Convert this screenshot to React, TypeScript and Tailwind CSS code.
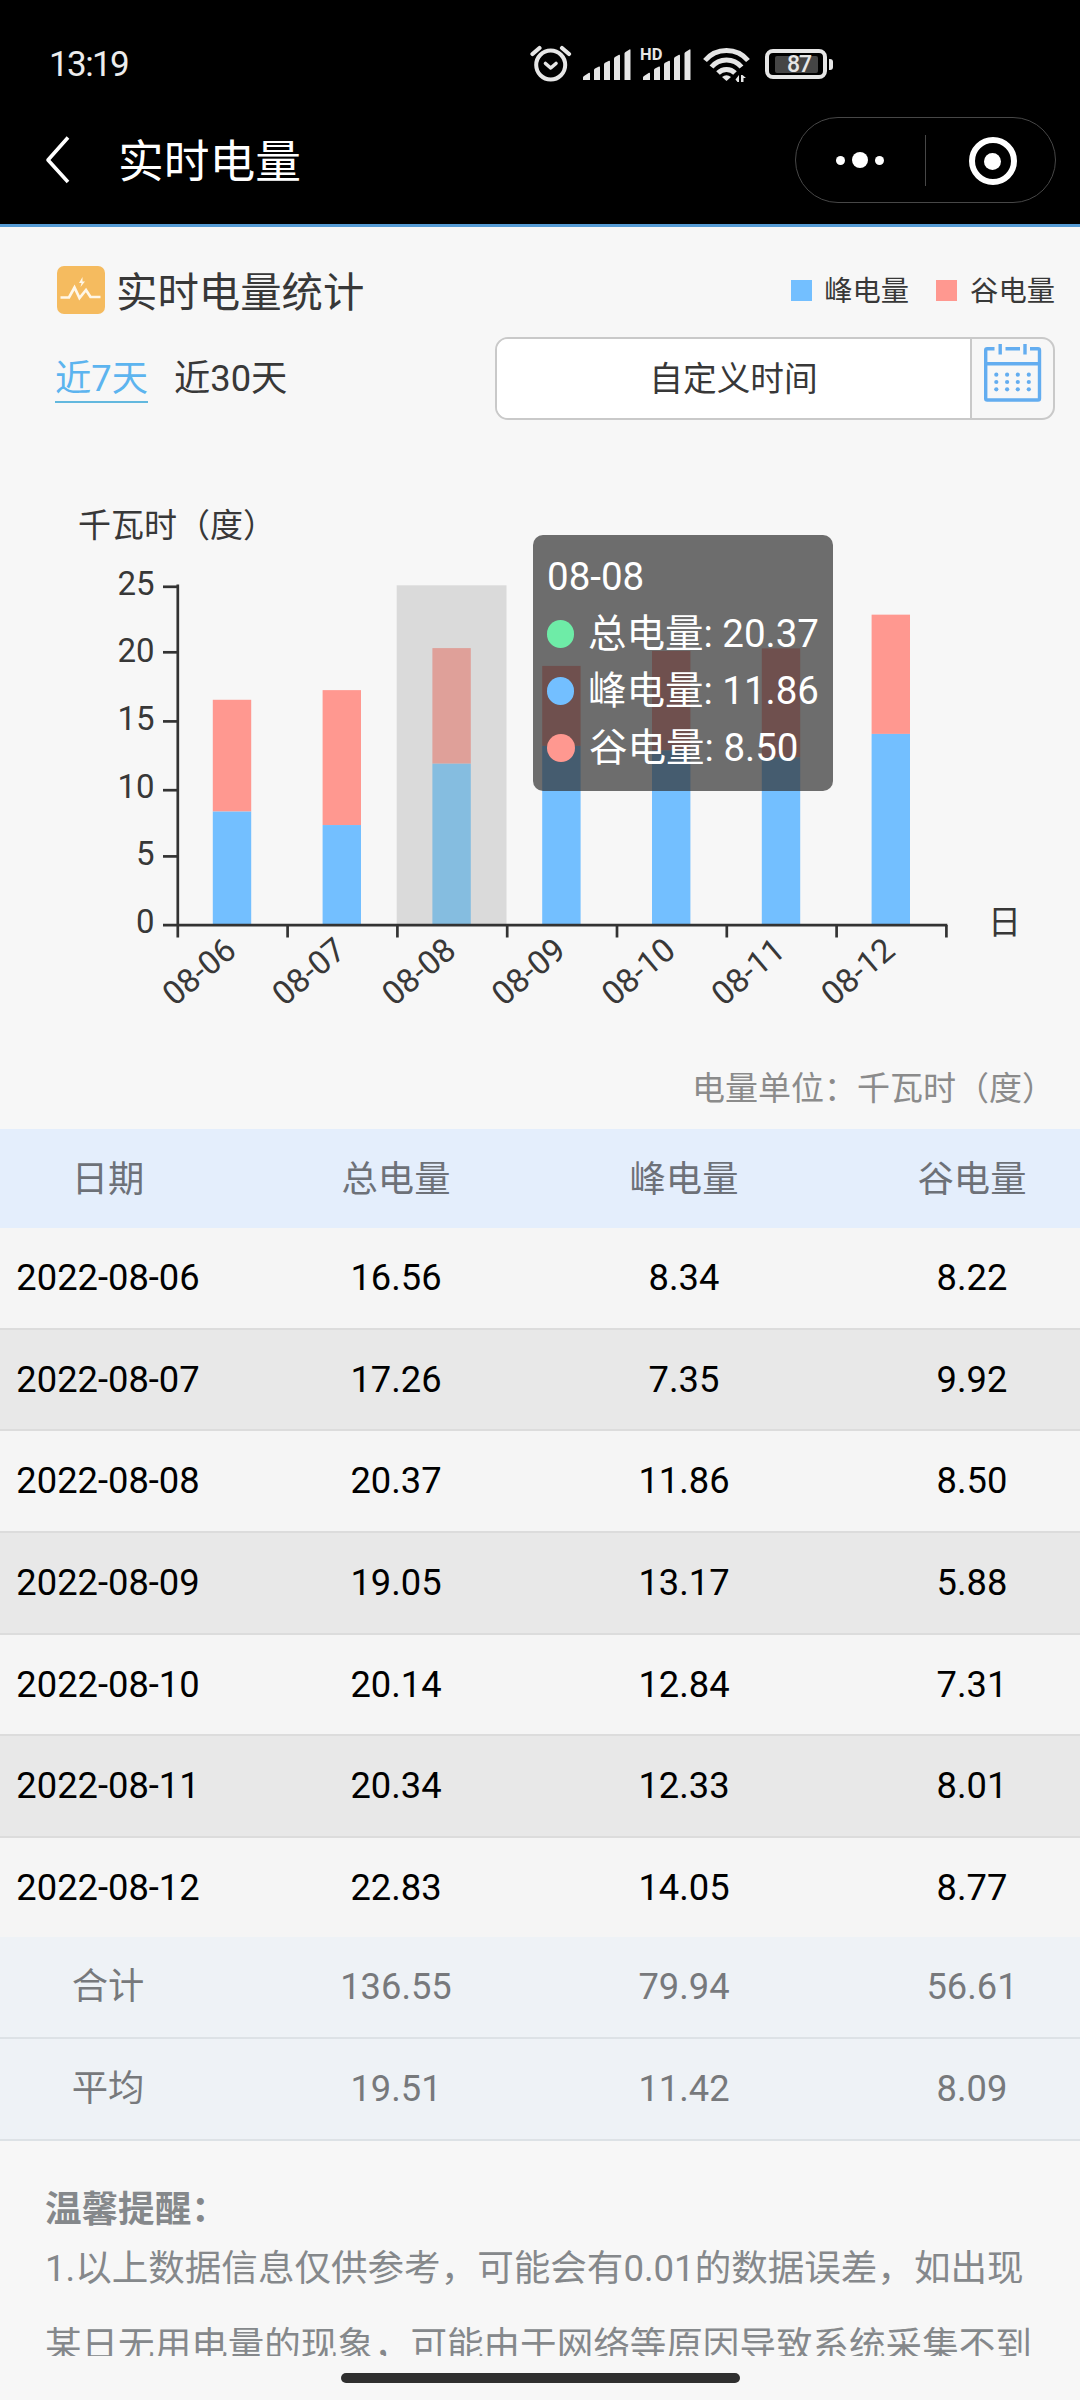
import React from 'react';

interface UsageRow {
  date: string;
  total: number;
  peak: number;
  valley: number;
}

const rows: UsageRow[] = [
  { date: '2022-08-06', total: 16.56, peak: 8.34, valley: 8.22 },
  { date: '2022-08-07', total: 17.26, peak: 7.35, valley: 9.92 },
  { date: '2022-08-08', total: 20.37, peak: 11.86, valley: 8.5 },
  { date: '2022-08-09', total: 19.05, peak: 13.17, valley: 5.88 },
  { date: '2022-08-10', total: 20.14, peak: 12.84, valley: 7.31 },
  { date: '2022-08-11', total: 20.34, peak: 12.33, valley: 8.01 },
  { date: '2022-08-12', total: 22.83, peak: 14.05, valley: 8.77 },
];

const summary = [
  ['合计', '136.55', '79.94', '56.61'],
  ['平均', '19.51', '11.42', '8.09'],
];

const ACTIVE = 2;

const SignalBars: React.FC = () => (
  <svg width="48" height="32" viewBox="0 0 48 32" fill="#e6e6e6">
    <path d="M0 31V28.5Q0 27.5 1 27L6 23.8Q7 23.3 7 24.5V31Z" />
    <path d="M11 31V21Q11 20 12 19.5L16 17.6Q17 17.2 17 18.4V31Z" />
    <path d="M21 31V15.3Q21 14.3 22 13.8L26 11.8Q27 11.3 27 12.5V31Z" />
    <path d="M31 31V9.6Q31 8.6 32 8L36 5.8Q37 5.3 37 6.5V31Z" />
    <path d="M41.500 31V4.500Q41.500 3.500 42.500 2.900L46.500 0.500Q47.500 0 47.500 1.200V31Z" />
  </svg>
);

const StatusBar: React.FC = () => (
  <div className="flex h-[90px] items-start pl-[49px] pt-[43px]">
    <span className="w-[481px] text-[35px] leading-[44px] tracking-[-1.6px] text-[#ececec]">13:19</span>
    <div className="flex items-start">
      <svg className="mt-[2px]" width="42" height="38" viewBox="0 0 42 38" fill="none" stroke="#e6e6e6" strokeLinecap="round">
        <circle cx="20.700" cy="20" r="14.500" strokeWidth="4" />
        <path d="M15.500 18.500L20.700 23L26 18.500" strokeWidth="3.600" strokeLinejoin="round" />
        <path d="M2.500 9L9.500 3M39 9L32 3" strokeWidth="4.200" />
      </svg>
      <div className="ml-[11px] mt-[6px]">
        <SignalBars />
      </div>
      <div className="relative ml-[12px] mt-[6px]">
        <SignalBars />
        <span className="absolute left-[-3px] top-[-3px] text-[16.500px] font-bold leading-[18px] text-[#e6e6e6]">HD</span>
      </div>
      <svg className="ml-[12px] mt-[4px]" width="48" height="36" viewBox="0 0 48 36" fill="none" stroke="#e6e6e6" strokeWidth="5">
        <path d="M2 13.500A28 28 0 0 1 45 13.500" />
        <path d="M8.500 20A19.500 19.500 0 0 1 38.500 20" />
        <path d="M15 26A11.800 11.800 0 0 1 32 26" />
        <path d="M23.500 34L19 30Q23.500 26.500 28 30Z" fill="#e6e6e6" stroke="none" />
        <path d="M32.500 32.500L36 28V35H34.500ZM38 28H39.500L43 31H40.500V35H38Z" fill="#e6e6e6" stroke="none" />
      </svg>
      <div className="ml-[14px] mt-[6px] flex items-center gap-[2px]">
        <div className="flex h-[30px] w-[62px] items-center justify-center rounded-[8px] border-[4px] border-[#e6e6e6]">
          <div className="flex h-[17px] w-[43px] items-center justify-center rounded-[2px] bg-[#454545] pl-[6px] text-[23px] font-medium leading-[17px] tracking-[-1px] text-[#e6e6e6]">
            87
          </div>
        </div>
        <div className="h-[11px] w-[4px] rounded-r-[3px] bg-[#e6e6e6]" />
      </div>
    </div>
  </div>
);

const NavBar: React.FC = () => (
  <div className="flex h-[134px] items-start justify-between pl-[44px] pr-[24px] pt-[27px]">
    <div className="flex h-[86px] items-center">
      <svg width="28" height="48" viewBox="0 0 28 48" fill="none" stroke="#fff" strokeWidth="3.600" strokeLinejoin="round">
        <path d="M24 1.500L4 24L24 46" />
      </svg>
      <h1 className="ml-[46px] pt-[5px] text-[45.750px] leading-[64px] text-white">实时电量</h1>
    </div>
    <div className="flex h-[86px] w-[261px] items-center rounded-full border border-[#474747]">
      <div className="flex w-[129px] items-center justify-center gap-[7px] pr-[2px]">
        <span className="h-[9px] w-[9px] rounded-full bg-white" />
        <span className="h-4 w-4 rounded-full bg-white" />
        <span className="h-[9px] w-[9px] rounded-full bg-white" />
      </div>
      <span className="h-[51px] w-px bg-[#474747]" />
      <div className="flex flex-1 items-center justify-center">
        <div className="ml-[4px] mt-[2px] flex h-12 w-12 items-center justify-center rounded-full border-[6px] border-white">
          <span className="h-[17px] w-[17px] rounded-full bg-white" />
        </div>
      </div>
    </div>
  </div>
);

const StatIcon: React.FC = () => (
  <svg width="48" height="48" viewBox="0 0 48 48" fill="none">
    <rect width="48" height="48" rx="7" fill="#f5bb5f" />
    <path d="M3.500 31.500H12L17.500 21.500L22.500 32L29 24L33.500 31H43.500" stroke="#fff7e8" strokeWidth="2.700" />
    <path d="M25.500 11L22 17H24.500L23.500 21L28 15.500H25.500Z" fill="#fff7e8" />
  </svg>
);

const CalendarIcon: React.FC = () => (
  <svg width="58" height="58" viewBox="0 0 58 58" fill="none" stroke="#63adf0" strokeWidth="3.400">
    <path d="M10.500 4.800H3.200Q1.700 4.800 1.700 6.300V54.500Q1.700 56 3.200 56H54Q55.500 56 55.500 54.500V6.300Q55.500 4.800 54 4.800H46M21.500 4.800H36M1.700 19.800H55.500" />
    <path d="M16.200 0V10.500M41 0V10.500" />
    {[30.7, 38, 45.3].map((y) =>
      [12.3, 23.1, 33.8, 44.8].map((x) => <circle key={`${x}-${y}`} cx={x} cy={y} r="2.1" fill="#63adf0" stroke="none" />)
    )}
  </svg>
);

const Legend: React.FC = () => (
  <div className="flex items-center gap-[27px] text-[28.300px] leading-[40px] text-[#383838]">
    <span className="flex items-center gap-[12px]">
      <i className="h-[21px] w-[21px] bg-[#73bfff]" />
      <span className="pt-[4px]">峰电量</span>
    </span>
    <span className="flex items-center gap-[13px]">
      <i className="h-[21px] w-[21px] bg-[#ff9890]" />
      <span className="pt-[4px]">谷电量</span>
    </span>
  </div>
);

const UsageChart: React.FC = () => {
  const x0 = 177.8;
  const y0 = 425;
  const step = 109.8;
  const unit = 13.6;
  return (
    <svg className="block" width="1080" height="540" viewBox="0 0 1080 540" fontSize="33" fill="#383838">
      <text x="78" y="37">千瓦时（度）</text>
      <rect x={x0 + step * ACTIVE - 0.7} y="85.300" width={step} height="339.700" fill="#dadada" />
      {rows.map((r, i) => {
        const x = x0 + step * i + 35;
        const active = i === ACTIVE;
        const peakH = r.peak * unit;
        const valleyH = r.valley * unit;
        return (
          <g key={r.date}>
            <rect x={x} y={y0 - peakH - valleyH} width="38.400" height={valleyH} fill={active ? '#dfa099' : '#ff9890'} />
            <rect x={x} y={y0 - peakH} width="38.400" height={peakH} fill={active ? '#85bde0' : '#73bfff'} />
            <text
              transform={`translate(${198.8 + step * i} 471.300) rotate(-40)`}
              dy="0.356em"
              fontSize="33"
              textAnchor="middle"
            >
              {r.date.slice(5)}
            </text>
          </g>
        );
      })}
      <g stroke="#333" strokeWidth="2.700">
        <path d="M177.800 84.500V437.500M163 425.200H947.300" />
        {[86.8, 152.3, 221.4, 290.2, 356.4].map((y) => (
          <path key={y} d={`M163 ${y}H178`} />
        ))}
        {[1, 2, 3, 4, 5, 6, 7].map((i) => (
          <path key={i} d={`M${x0 + i * step} 425V437.500`} />
        ))}
      </g>
      {[25, 20, 15, 10, 5, 0].map((v, i) => (
        <text key={v} x="154.500" y={94.8 + i * 67.6} textAnchor="end">
          {v}
        </text>
      ))}
      <text x="988" y="434">日</text>
    </svg>
  );
};

const tooltipItems = [
  { dot: 'bg-[#6eeca7]', label: '总电量', value: rows[ACTIVE].total },
  { dot: 'bg-[#73bfff]', label: '峰电量', value: rows[ACTIVE].peak },
  { dot: 'bg-[#ff9890]', label: '谷电量', value: rows[ACTIVE].valley },
];

const ChartTooltip: React.FC = () => (
  <div className="absolute left-[533px] top-[35px] h-[256px] w-[300px] rounded-[10px] bg-[rgba(50,50,50,0.7)] px-[14px] pt-[13px] text-[38.500px] leading-[57px] text-white">
    <div>{rows[ACTIVE].date.slice(5)}</div>
    {tooltipItems.map((t) => (
      <div key={t.label} className="flex items-center whitespace-nowrap">
        <span className={`mr-[14px] h-[28px] w-[28px] rounded-full ${t.dot}`} />
        {t.label}: {t.value.toFixed(2)}
      </div>
    ))}
  </div>
);

const TableRow: React.FC<{ cells: string[]; className: string }> = ({ cells, className }) => (
  <div className={`flex justify-between ${className}`}>
    {cells.map((c, i) => (
      <div key={i} className="w-[216px] text-center">
        {c}
      </div>
    ))}
  </div>
);

const UsageTable: React.FC = () => (
  <div className="text-[36.300px] leading-[99px]">
    <TableRow cells={['日期', '总电量', '峰电量', '谷电量']} className="h-[99px] bg-[#e4eefc] pt-px text-[#6d7178]" />
    {rows.map((r, i) => (
      <TableRow
        key={r.date}
        cells={[r.date, r.total.toFixed(2), r.peak.toFixed(2), r.valley.toFixed(2)]}
        className={`text-black ${i % 2 ? 'bg-[#e8e8e8]' : 'bg-[#f5f5f5]'} ${
          i < rows.length - 1 ? 'h-[101.670px] border-b-2 border-[#dcdcdc]' : 'h-[99px]'
        }`}
      />
    ))}
    {summary.map((s) => (
      <TableRow key={s[0]} cells={s} className="h-[102px] border-b-2 border-[#dde2e6] bg-[#eef2f6] text-[#77797c]" />
    ))}
  </div>
);

const App: React.FC = () => {
  return (
    <div className="flex h-[2400px] w-[1080px] flex-col overflow-hidden bg-[#f7f7f7] font-['Roboto','Noto_Sans_CJK_SC',sans-serif]">
      <header className="border-b-[3px] border-[#559bd4] bg-black">
        <StatusBar />
        <NavBar />
      </header>

      <section className="h-[273px] pl-[57px] pr-[25px] pt-[38px]">
        <div className="flex h-[50px] items-center justify-between">
          <div className="flex items-center gap-[11px]">
            <StatIcon />
            <h2 className="pt-[5px] text-[41.400px] leading-[50px] text-[#383838]">实时电量统计</h2>
          </div>
          <Legend />
        </div>
        <div className="mt-[22px] flex h-[83px] items-start justify-between">
          <div className="ml-[-2px] mt-[17px] flex gap-[26px] text-[36.300px] leading-[50px] text-[#383838]">
            <span className="h-[49px] border-b-2 border-[#62b8de] text-[#5cb4ef]">近7天</span>
            <span>近30天</span>
          </div>
          <div className="flex h-[83px] w-[560px] overflow-hidden rounded-[13px] border-2 border-[#c9c9c9]">
            <div className="flex-1 border-r-2 border-[#c9c9c9] bg-white text-center text-[33.700px] leading-[82px] text-[#383838]">
              自定义时间
            </div>
            <div className="flex w-[81px] justify-center pt-[5px]">
              <CalendarIcon />
            </div>
          </div>
        </div>
      </section>

      <section className="relative h-[540px]">
        <UsageChart />
        <ChartTooltip />
      </section>

      <div className="h-[89px] pr-[25px] pt-[25px] text-right text-[33px] leading-[48px] text-[#8b8b8b]">电量单位：千瓦时（度）</div>

      <UsageTable />

      <section className="h-[215px] overflow-hidden pl-[45px] pt-[44px] text-[36.550px] text-[#85888b]">
        <p className="font-bold leading-[50px]">温馨提醒：</p>
        <p className="mt-[-5px] whitespace-nowrap leading-[77.500px]">
          1.以上数据信息仅供参考，可能会有0.01的数据误差，如出现
          <br />
          某日无用电量的现象，可能由于网络等原因导致系统采集不到
        </p>
      </section>

      <div className="flex justify-center pt-[17px]">
        <div className="h-[10px] w-[399px] rounded-full bg-[#2f2f2f]" />
      </div>
    </div>
  );
};

export default App;
